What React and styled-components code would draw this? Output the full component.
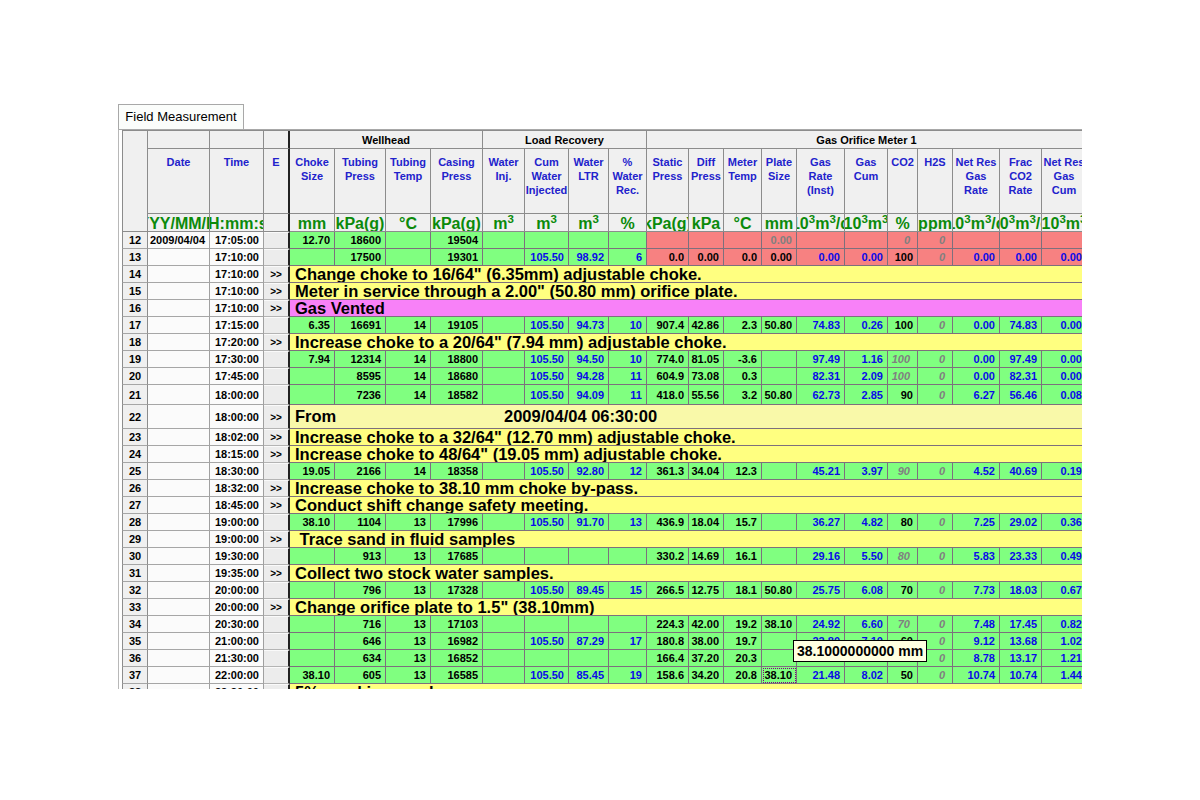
import React from 'react';
import styled, { createGlobalStyle } from 'styled-components';

const COLS = [26, 62, 54, 26, 45, 51, 45, 52, 42, 44, 40, 38, 42, 35, 38, 35, 48, 43, 30, 35, 47, 42, 45];
const GRID = COLS.map(w => w + 'px').join(' ');

const GREEN = '#80ff80';
const PINK = '#f78181';
const YELLOW = '#ffff80';
const PALE = '#f9f9a9';
const VENT = '#f881f8';
const LINE = '#7d707d';
const HEAD_LINE = '#8c8c8c';
const BLUE = '#0a0ae8';

const GlobalStyle = createGlobalStyle`
  html, body {
    margin: 0;
    padding: 0;
    background: #ffffff;
    font-family: "Liberation Sans", Arial, sans-serif;
  }
`;

const Page = styled.div`
  padding: 104px 0 0 118px;
  display: flex;
  flex-direction: column;
  align-items: flex-start;
`;

const Tab = styled.div`
  width: 126px;
  height: 26px;
  box-sizing: border-box;
  border: 1px solid #a8a8a8;
  border-bottom: 1px solid #fbfdfb;
  margin-bottom: -1px;
  padding-bottom: 2px;
  background: #fbfdfb;
  font-size: 13px;
  color: #000;
  display: flex;
  align-items: center;
  justify-content: center;
  position: relative;
`;

const Pane = styled.div`
  position: relative;
  width: 964px;
  height: 560px;
  box-sizing: border-box;
  border-top: 1px solid #a8a8a8;
  border-left: 1px solid #b8b8b8;
  padding-left: 3px;
  overflow: hidden;
`;

const Sheet = styled.div`
  width: max-content;
`;

const Header = styled.div`
  display: grid;
  grid-template-columns: ${GRID};
  grid-template-rows: 18px 65px 18px;
  border-top: 1px solid ${HEAD_LINE};
  background: #f0f0f0;
`;

const HeadCell = styled.div`
  grid-column: ${p => p.$col};
  grid-row: ${p => p.$row};
  box-sizing: border-box;
  border-right: ${p => (p.$sep ? '2px solid #222' : `1px solid ${HEAD_LINE}`)};
  border-bottom: 1px solid ${HEAD_LINE};
  border-left: ${p => (p.$first ? `1px solid ${HEAD_LINE}` : 'none')};
  overflow: hidden;
  min-width: 0;
`;

const GroupLabel = styled(HeadCell)`
  font-size: 11px;
  font-weight: bold;
  color: #000;
  display: flex;
  align-items: center;
  justify-content: center;
  white-space: nowrap;
`;

const Caption = styled(HeadCell)`
  font-size: 11px;
  font-weight: bold;
  color: #2222cc;
  text-align: center;
  line-height: 14px;
  padding-top: 6px;
  white-space: pre-line;
`;

const Unit = styled(HeadCell)`
  font-size: 16px;
  font-weight: bold;
  color: #0b8a0b;
  display: flex;
  align-items: center;
  justify-content: center;
  white-space: nowrap;
  padding-top: 2px;

  sup {
    font-size: 11.5px;
    line-height: 0;
    vertical-align: baseline;
    position: relative;
    top: -5px;
  }
`;

const Row = styled.div`
  display: grid;
  grid-template-columns: ${GRID};
  height: ${p => p.$h}px;
`;

const Base = styled.div`
  box-sizing: border-box;
  height: 100%;
  min-width: 0;
  overflow: hidden;
  white-space: nowrap;
  font-size: 11px;
  font-weight: bold;
  display: flex;
  align-items: center;
`;

const RowNum = styled(Base)`
  background: #f0f0f0;
  border-left: 1px solid #8c8c8c;
  border-right: 1px solid #8c8c8c;
  border-bottom: 1px solid #a6a6a6;
  justify-content: center;
  color: #000;
`;

const Frozen = styled(Base)`
  background: #fbfbfb;
  border-right: 1px solid #a0a0a0;
  border-bottom: 1px solid #a6a6a6;
  justify-content: ${p => p.$align || 'flex-end'};
  padding: 0 4px 0 2px;
  color: #000;
`;

const Marker = styled(Base)`
  background: #ececec;
  border-top: 1px solid #fafafa;
  border-right: 2px solid #222;
  border-bottom: 1px solid #b4b4b4;
  justify-content: center;
  font-size: 10px;
  color: #000;
`;

const Cell = styled(Base)`
  background: ${p => p.$bg};
  border-right: 1px solid ${LINE};
  border-bottom: 1px solid ${LINE};
  justify-content: flex-end;
  padding-right: ${p => (p.$italic ? 7 : 4)}px;
  color: ${p => p.$color};
  font-style: ${p => (p.$italic ? 'italic' : 'normal')};
  outline: ${p => (p.$focus ? '1px dotted #800080' : 'none')};
  outline-offset: -2px;
`;

const Note = styled(Base)`
  grid-column: 5 / -1;
  background: ${p => p.$bg};
  border-bottom: 1px solid ${LINE};
  font-size: 16.5px;
  color: #000;
  padding-left: 5px;
  white-space: pre;
`;

const FromLabel = styled.span`
  width: 209px;
  flex-shrink: 0;
`;

const Tooltip = styled.div`
  position: absolute;
  left: 674px;
  top: 510px;
  padding: 2px 3px 2px 3px;
  background: #ffffe1;
  border: 1px solid #000;
  font-size: 14px;
  font-weight: bold;
  color: #000;
  white-space: nowrap;
  line-height: 16px;
`;

const m3 = <>m<sup>3</sup></>;
const k3 = <>10<sup>3</sup>m<sup>3</sup></>;
const k3d = <>10<sup>3</sup>m<sup>3</sup>/d</>;

const columns = [
  { cap: 'Choke\nSize', unit: 'mm' },
  { cap: 'Tubing\nPress', unit: 'kPa(g)' },
  { cap: 'Tubing\nTemp', unit: '°C' },
  { cap: 'Casing\nPress', unit: 'kPa(g)' },
  { cap: 'Water\nInj.', unit: m3 },
  { cap: 'Cum\nWater\nInjected', unit: m3, blue: true },
  { cap: 'Water\nLTR', unit: m3, blue: true },
  { cap: '%\nWater\nRec.', unit: '%', blue: true },
  { cap: 'Static\nPress', unit: 'kPa(g)' },
  { cap: 'Diff\nPress', unit: 'kPa' },
  { cap: 'Meter\nTemp', unit: '°C' },
  { cap: 'Plate\nSize', unit: 'mm' },
  { cap: 'Gas\nRate\n(Inst)', unit: k3d, blue: true },
  { cap: 'Gas\nCum', unit: k3, blue: true },
  { cap: 'CO2', unit: '%' },
  { cap: 'H2S', unit: 'ppm' },
  { cap: 'Net Res\nGas\nRate', unit: k3d, blue: true },
  { cap: 'Frac\nCO2\nRate', unit: k3d, blue: true },
  { cap: 'Net Res\nGas\nCum', unit: k3, blue: true },
];

const rows = [
  { n: 12, date: '2009/04/04', time: '17:05:00', red: true, v: ['12.70', '18600', '', '19504', '', '', '', '', '', '', '', '^0.00', '', '', '~0', '~0', '', '', ''] },
  { n: 13, time: '17:10:00', red: true, v: ['', '17500', '', '19301', '', '105.50', '98.92', '6', '0.0', '0.00', '0.0', '0.00', '0.00', '0.00', '100', '~0', '0.00', '0.00', '0.00'] },
  { n: 14, time: '17:10:00', note: 'Change choke to 16/64" (6.35mm) adjustable choke.' },
  { n: 15, time: '17:10:00', note: 'Meter in service through a 2.00" (50.80 mm) orifice plate.' },
  { n: 16, time: '17:10:00', note: 'Gas Vented', bg: VENT },
  { n: 17, time: '17:15:00', v: ['6.35', '16691', '14', '19105', '', '105.50', '94.73', '10', '907.4', '42.86', '2.3', '50.80', '74.83', '0.26', '100', '~0', '0.00', '74.83', '0.00'] },
  { n: 18, time: '17:20:00', note: 'Increase choke to a 20/64" (7.94 mm) adjustable choke.' },
  { n: 19, time: '17:30:00', v: ['7.94', '12314', '14', '18800', '', '105.50', '94.50', '10', '774.0', '81.05', '-3.6', '', '97.49', '1.16', '~100', '~0', '0.00', '97.49', '0.00'] },
  { n: 20, time: '17:45:00', v: ['', '8595', '14', '18680', '', '105.50', '94.28', '11', '604.9', '73.08', '0.3', '', '82.31', '2.09', '~100', '~0', '0.00', '82.31', '0.00'] },
  { n: 21, time: '18:00:00', h: 20, v: ['', '7236', '14', '18582', '', '105.50', '94.09', '11', '418.0', '55.56', '3.2', '50.80', '62.73', '2.85', '90', '~0', '6.27', '56.46', '0.08'] },
  { n: 22, time: '18:00:00', h: 24, from: '2009/04/04 06:30:00' },
  { n: 23, time: '18:02:00', note: 'Increase choke to a 32/64" (12.70 mm) adjustable choke.' },
  { n: 24, time: '18:15:00', note: 'Increase choke to 48/64" (19.05 mm) adjustable choke.' },
  { n: 25, time: '18:30:00', v: ['19.05', '2166', '14', '18358', '', '105.50', '92.80', '12', '361.3', '34.04', '12.3', '', '45.21', '3.97', '~90', '~0', '4.52', '40.69', '0.19'] },
  { n: 26, time: '18:32:00', note: 'Increase choke to 38.10 mm choke by-pass.' },
  { n: 27, time: '18:45:00', note: 'Conduct shift change safety meeting.' },
  { n: 28, time: '19:00:00', v: ['38.10', '1104', '13', '17996', '', '105.50', '91.70', '13', '436.9', '18.04', '15.7', '', '36.27', '4.82', '80', '~0', '7.25', '29.02', '0.36'] },
  { n: 29, time: '19:00:00', note: ' Trace sand in fluid samples' },
  { n: 30, time: '19:30:00', v: ['', '913', '13', '17685', '', '', '', '', '330.2', '14.69', '16.1', '', '29.16', '5.50', '~80', '~0', '5.83', '23.33', '0.49'] },
  { n: 31, time: '19:35:00', note: 'Collect two stock water samples.' },
  { n: 32, time: '20:00:00', v: ['', '796', '13', '17328', '', '105.50', '89.45', '15', '266.5', '12.75', '18.1', '50.80', '25.75', '6.08', '70', '~0', '7.73', '18.03', '0.67'] },
  { n: 33, time: '20:00:00', note: 'Change orifice plate to 1.5" (38.10mm)' },
  { n: 34, time: '20:30:00', v: ['', '716', '13', '17103', '', '', '', '', '224.3', '42.00', '19.2', '38.10', '24.92', '6.60', '~70', '~0', '7.48', '17.45', '0.82'] },
  { n: 35, time: '21:00:00', v: ['', '646', '13', '16982', '', '105.50', '87.29', '17', '180.8', '38.00', '19.7', '', '22.80', '7.10', '60', '~0', '9.12', '13.68', '1.02'] },
  { n: 36, time: '21:30:00', v: ['', '634', '13', '16852', '', '', '', '', '166.4', '37.20', '20.3', '', '20.84', '7.63', '~60', '~0', '8.78', '13.17', '1.21'] },
  { n: 37, time: '22:00:00', focus: 11, v: ['38.10', '605', '13', '16585', '', '105.50', '85.45', '19', '158.6', '34.20', '20.8', '38.10', '21.48', '8.02', '50', '~0', '10.74', '10.74', '1.44'] },
  { n: 38, time: '22:30:00', note: '5% sand in samples' },
];

const SheetHeader = () => (
  <Header>
    <HeadCell $col="1" $row="1 / 4" $first />
    {['Date', 'Time', 'E'].map((cap, i) => (
      <React.Fragment key={cap}>
        <HeadCell $col={i + 2} $row="1" $sep={i === 2} />
        <Caption $col={i + 2} $row="2" $sep={i === 2}>{cap}</Caption>
        <Unit $col={i + 2} $row="3" $sep={i === 2}>{['YYYY/MM/DD', 'HH:mm:ss', ''][i]}</Unit>
      </React.Fragment>
    ))}
    <GroupLabel $col="5 / 9" $row="1">Wellhead</GroupLabel>
    <GroupLabel $col="9 / 13" $row="1">Load Recovery</GroupLabel>
    <GroupLabel $col="13 / 24" $row="1">Gas Orifice Meter 1</GroupLabel>
    {columns.map((c, i) => (
      <React.Fragment key={i}>
        <Caption $col={i + 5} $row="2">{c.cap}</Caption>
        <Unit $col={i + 5} $row="3">{c.unit}</Unit>
      </React.Fragment>
    ))}
  </Header>
);

const DataCell = ({ value, col, red, focus }) => {
  const gray = value.startsWith('~') || value.startsWith('^');
  const text = gray ? value.slice(1) : value;
  const color = gray ? '#808080' : columns[col].blue ? BLUE : '#000';
  return (
    <Cell
      $bg={red && col >= 8 ? PINK : GREEN}
      $color={color}
      $italic={value.startsWith('~')}
      $focus={focus}
    >
      {text}
    </Cell>
  );
};

const SheetRow = ({ row }) => {
  const comment = row.note !== undefined || row.from;
  return (
    <Row $h={row.h || 17}>
      <RowNum>{row.n}</RowNum>
      <Frozen $align="center">{row.date || ''}</Frozen>
      <Frozen>{row.time}</Frozen>
      <Marker>{comment ? '>>' : ''}</Marker>
      {row.from && (
        <Note $bg={PALE}>
          <FromLabel>From</FromLabel>
          {row.from}
        </Note>
      )}
      {row.note !== undefined && <Note $bg={row.bg || YELLOW}>{row.note}</Note>}
      {row.v && row.v.map((val, i) => (
        <DataCell key={i} value={val} col={i} red={row.red} focus={row.focus === i} />
      ))}
    </Row>
  );
};

export default function App() {
  return (
    <Page>
      <GlobalStyle />
      <Tab>Field Measurement</Tab>
      <Pane>
        <Sheet>
          <SheetHeader />
          {rows.map(r => <SheetRow key={r.n} row={r} />)}
        </Sheet>
        <Tooltip>38.1000000000 mm</Tooltip>
      </Pane>
    </Page>
  );
}
